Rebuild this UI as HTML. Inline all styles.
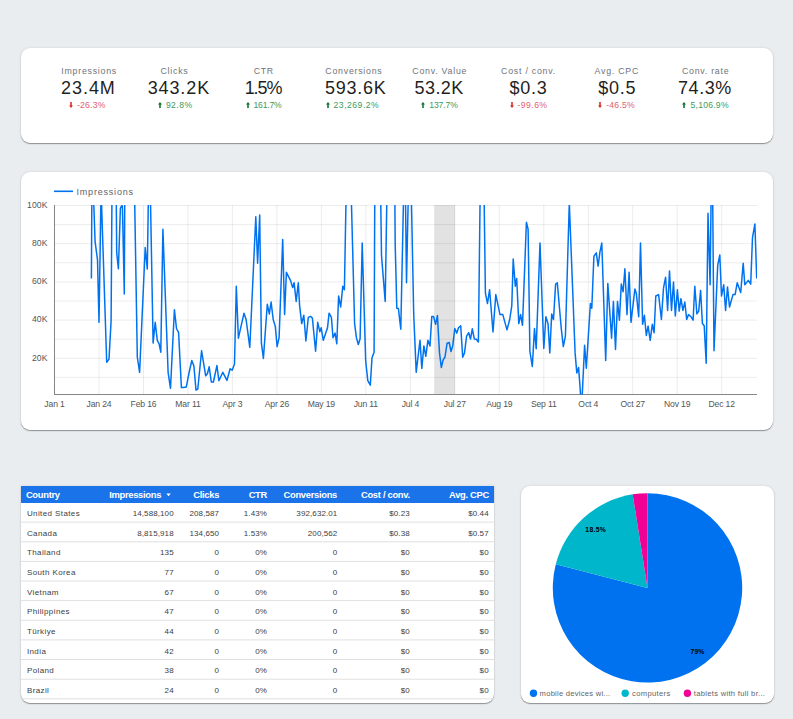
<!DOCTYPE html>
<html><head><meta charset="utf-8"><style>
html,body{margin:0;padding:0;}
body{width:793px;height:719px;overflow:hidden;background:#e9edf0;position:relative;font-family:"Liberation Sans", sans-serif;}
.card{position:absolute;background:#fff;border-radius:9px;box-shadow:0 1px 1px rgba(0,0,0,.36),0 0 3px rgba(0,0,0,.11);}
.t{position:absolute;white-space:nowrap;}
svg{position:absolute;left:0;top:0;}
</style></head><body>
<div class="card" style="left:21px;top:48px;width:752px;height:95px;"></div>
<div class="card" style="left:21px;top:172px;width:752px;height:257.5px;"></div>
<div class="card" style="left:21px;top:486px;width:473px;height:217px;border-radius:0 0 9px 9px;"></div>
<div class="card" style="left:521px;top:486px;width:253px;height:217px;"></div>
<div class="t" style="left:-110.85px;width:400px;text-align:center;top:67.45px;font-size:8.8px;line-height:8.8px;color:#6f7378;font-weight:normal;letter-spacing:0.75px;">Impressions</div>
<div class="t" style="left:-111.60px;width:400px;text-align:center;top:78.56px;font-size:18px;line-height:18px;color:#1f1f1f;font-weight:normal;letter-spacing:0.95px;">23.4M</div>
<div class="t" style="left:-112.70px;width:400px;text-align:center;top:100.92px;font-size:8.6px;line-height:8.6px;color:#e06070;font-weight:normal;letter-spacing:0.25px;"><svg width="4" height="6" viewBox="0 0 4 6" style="position:static;display:inline-block;vertical-align:0;margin-right:4px"><path d="M2,6 L4,3.6 L2.8,3.6 L2.8,0 L1.2,0 L1.2,3.6 L0,3.6 Z" fill="#d93025"/></svg>-26.3%</div>
<div class="t" style="left:-25.50px;width:400px;text-align:center;top:67.45px;font-size:8.8px;line-height:8.8px;color:#6f7378;font-weight:normal;letter-spacing:0.75px;">Clicks</div>
<div class="t" style="left:-21.15px;width:400px;text-align:center;top:78.56px;font-size:18px;line-height:18px;color:#1f1f1f;font-weight:normal;letter-spacing:0.9px;">343.2K</div>
<div class="t" style="left:-24.80px;width:400px;text-align:center;top:100.92px;font-size:8.6px;line-height:8.6px;color:#3c9a5f;font-weight:normal;letter-spacing:0.45px;"><svg width="4" height="6" viewBox="0 0 4 6" style="position:static;display:inline-block;vertical-align:0;margin-right:4px"><path d="M2,0 L4,2.4 L2.8,2.4 L2.8,6 L1.2,6 L1.2,2.4 L0,2.4 Z" fill="#137333"/></svg>92.8%</div>
<div class="t" style="left:63.80px;width:400px;text-align:center;top:67.45px;font-size:8.8px;line-height:8.8px;color:#6f7378;font-weight:normal;letter-spacing:0.75px;">CTR</div>
<div class="t" style="left:63.00px;width:400px;text-align:center;top:78.56px;font-size:18px;line-height:18px;color:#1f1f1f;font-weight:normal;letter-spacing:-1.1px;">1.5%</div>
<div class="t" style="left:63.50px;width:400px;text-align:center;top:100.92px;font-size:8.6px;line-height:8.6px;color:#3c9a5f;font-weight:normal;letter-spacing:-0.2px;"><svg width="4" height="6" viewBox="0 0 4 6" style="position:static;display:inline-block;vertical-align:0;margin-right:4px"><path d="M2,0 L4,2.4 L2.8,2.4 L2.8,6 L1.2,6 L1.2,2.4 L0,2.4 Z" fill="#137333"/></svg>161.7%</div>
<div class="t" style="left:153.95px;width:400px;text-align:center;top:67.45px;font-size:8.8px;line-height:8.8px;color:#6f7378;font-weight:normal;letter-spacing:0.75px;">Conversions</div>
<div class="t" style="left:155.80px;width:400px;text-align:center;top:78.56px;font-size:18px;line-height:18px;color:#1f1f1f;font-weight:normal;letter-spacing:0.75px;">593.6K</div>
<div class="t" style="left:152.40px;width:400px;text-align:center;top:100.92px;font-size:8.6px;line-height:8.6px;color:#3c9a5f;font-weight:normal;letter-spacing:0.5px;"><svg width="4" height="6" viewBox="0 0 4 6" style="position:static;display:inline-block;vertical-align:0;margin-right:4px"><path d="M2,0 L4,2.4 L2.8,2.4 L2.8,6 L1.2,6 L1.2,2.4 L0,2.4 Z" fill="#137333"/></svg>23,269.2%</div>
<div class="t" style="left:239.75px;width:400px;text-align:center;top:67.45px;font-size:8.8px;line-height:8.8px;color:#6f7378;font-weight:normal;letter-spacing:0.75px;">Conv. Value</div>
<div class="t" style="left:239.10px;width:400px;text-align:center;top:78.56px;font-size:18px;line-height:18px;color:#1f1f1f;font-weight:normal;letter-spacing:0.4px;">53.2K</div>
<div class="t" style="left:239.55px;width:400px;text-align:center;top:100.92px;font-size:8.6px;line-height:8.6px;color:#3c9a5f;font-weight:normal;letter-spacing:-0.1px;"><svg width="4" height="6" viewBox="0 0 4 6" style="position:static;display:inline-block;vertical-align:0;margin-right:4px"><path d="M2,0 L4,2.4 L2.8,2.4 L2.8,6 L1.2,6 L1.2,2.4 L0,2.4 Z" fill="#137333"/></svg>137.7%</div>
<div class="t" style="left:328.50px;width:400px;text-align:center;top:67.45px;font-size:8.8px;line-height:8.8px;color:#6f7378;font-weight:normal;letter-spacing:0.75px;">Cost / conv.</div>
<div class="t" style="left:328.50px;width:400px;text-align:center;top:78.56px;font-size:18px;line-height:18px;color:#1f1f1f;font-weight:normal;letter-spacing:0.8px;">$0.3</div>
<div class="t" style="left:328.50px;width:400px;text-align:center;top:100.92px;font-size:8.6px;line-height:8.6px;color:#e06070;font-weight:normal;letter-spacing:0.45px;"><svg width="4" height="6" viewBox="0 0 4 6" style="position:static;display:inline-block;vertical-align:0;margin-right:4px"><path d="M2,6 L4,3.6 L2.8,3.6 L2.8,0 L1.2,0 L1.2,3.6 L0,3.6 Z" fill="#d93025"/></svg>-99.6%</div>
<div class="t" style="left:416.80px;width:400px;text-align:center;top:67.45px;font-size:8.8px;line-height:8.8px;color:#6f7378;font-weight:normal;letter-spacing:0.75px;">Avg. CPC</div>
<div class="t" style="left:417.30px;width:400px;text-align:center;top:78.56px;font-size:18px;line-height:18px;color:#1f1f1f;font-weight:normal;letter-spacing:0.8px;">$0.5</div>
<div class="t" style="left:416.60px;width:400px;text-align:center;top:100.92px;font-size:8.6px;line-height:8.6px;color:#e06070;font-weight:normal;letter-spacing:0.25px;"><svg width="4" height="6" viewBox="0 0 4 6" style="position:static;display:inline-block;vertical-align:0;margin-right:4px"><path d="M2,6 L4,3.6 L2.8,3.6 L2.8,0 L1.2,0 L1.2,3.6 L0,3.6 Z" fill="#d93025"/></svg>-46.5%</div>
<div class="t" style="left:505.65px;width:400px;text-align:center;top:67.45px;font-size:8.8px;line-height:8.8px;color:#6f7378;font-weight:normal;letter-spacing:0.75px;">Conv. rate</div>
<div class="t" style="left:504.90px;width:400px;text-align:center;top:78.56px;font-size:18px;line-height:18px;color:#1f1f1f;font-weight:normal;letter-spacing:0.5px;">74.3%</div>
<div class="t" style="left:505.65px;width:400px;text-align:center;top:100.92px;font-size:8.6px;line-height:8.6px;color:#3c9a5f;font-weight:normal;letter-spacing:0.25px;"><svg width="4" height="6" viewBox="0 0 4 6" style="position:static;display:inline-block;vertical-align:0;margin-right:4px"><path d="M2,0 L4,2.4 L2.8,2.4 L2.8,6 L1.2,6 L1.2,2.4 L0,2.4 Z" fill="#137333"/></svg>5,106.9%</div>
<svg width="793" height="719" viewBox="0 0 793 719">
<defs><clipPath id="pc"><rect x="54" y="205" width="703" height="189.5"/></clipPath></defs>
<rect x="434.2" y="205" width="20.8" height="189.3" fill="#e2e2e2"/>
<line x1="54" y1="205.5" x2="757" y2="205.5" stroke="#000" stroke-opacity="0.075" stroke-width="1"/>
<line x1="54" y1="224.6" x2="757" y2="224.6" stroke="#000" stroke-opacity="0.075" stroke-width="1"/>
<line x1="54" y1="243.7" x2="757" y2="243.7" stroke="#000" stroke-opacity="0.075" stroke-width="1"/>
<line x1="54" y1="262.8" x2="757" y2="262.8" stroke="#000" stroke-opacity="0.075" stroke-width="1"/>
<line x1="54" y1="281.9" x2="757" y2="281.9" stroke="#000" stroke-opacity="0.075" stroke-width="1"/>
<line x1="54" y1="301.0" x2="757" y2="301.0" stroke="#000" stroke-opacity="0.075" stroke-width="1"/>
<line x1="54" y1="320.1" x2="757" y2="320.1" stroke="#000" stroke-opacity="0.075" stroke-width="1"/>
<line x1="54" y1="339.2" x2="757" y2="339.2" stroke="#000" stroke-opacity="0.075" stroke-width="1"/>
<line x1="54" y1="358.3" x2="757" y2="358.3" stroke="#000" stroke-opacity="0.075" stroke-width="1"/>
<line x1="54" y1="377.4" x2="757" y2="377.4" stroke="#000" stroke-opacity="0.075" stroke-width="1"/>
<line x1="99.0" y1="205" x2="99.0" y2="394" stroke="#000" stroke-opacity="0.075" stroke-width="1"/>
<line x1="143.5" y1="205" x2="143.5" y2="394" stroke="#000" stroke-opacity="0.075" stroke-width="1"/>
<line x1="187.9" y1="205" x2="187.9" y2="394" stroke="#000" stroke-opacity="0.075" stroke-width="1"/>
<line x1="232.4" y1="205" x2="232.4" y2="394" stroke="#000" stroke-opacity="0.075" stroke-width="1"/>
<line x1="276.9" y1="205" x2="276.9" y2="394" stroke="#000" stroke-opacity="0.075" stroke-width="1"/>
<line x1="321.4" y1="205" x2="321.4" y2="394" stroke="#000" stroke-opacity="0.075" stroke-width="1"/>
<line x1="365.9" y1="205" x2="365.9" y2="394" stroke="#000" stroke-opacity="0.075" stroke-width="1"/>
<line x1="410.3" y1="205" x2="410.3" y2="394" stroke="#000" stroke-opacity="0.075" stroke-width="1"/>
<line x1="454.8" y1="205" x2="454.8" y2="394" stroke="#000" stroke-opacity="0.075" stroke-width="1"/>
<line x1="499.3" y1="205" x2="499.3" y2="394" stroke="#000" stroke-opacity="0.075" stroke-width="1"/>
<line x1="543.8" y1="205" x2="543.8" y2="394" stroke="#000" stroke-opacity="0.075" stroke-width="1"/>
<line x1="588.3" y1="205" x2="588.3" y2="394" stroke="#000" stroke-opacity="0.075" stroke-width="1"/>
<line x1="632.7" y1="205" x2="632.7" y2="394" stroke="#000" stroke-opacity="0.075" stroke-width="1"/>
<line x1="677.2" y1="205" x2="677.2" y2="394" stroke="#000" stroke-opacity="0.075" stroke-width="1"/>
<line x1="721.7" y1="205" x2="721.7" y2="394" stroke="#000" stroke-opacity="0.075" stroke-width="1"/>
<line x1="54.5" y1="205" x2="54.5" y2="394.5" stroke="#858585" stroke-width="1"/>
<line x1="54" y1="394.5" x2="757" y2="394.5" stroke="#858585" stroke-width="1"/>
<path d="M91.4,278.6 L91.9,190 L93.3,190 L95.1,241.7 L97.5,259.8 L99,322.3 L101.1,190 L106.7,362.3 L109,359.1 L111.1,320.9 L112,190 L116.2,190 L116.7,252.9 L118.4,268.8 L120.4,208.3 L121.6,205.8 L122.4,206 L124.3,293.9 L124.8,190 L134.5,190 L137.3,357 L139.6,372.3 L145.2,247.6 L147.3,269.1 L148.5,190 L150.3,190 L153.1,343.1 L155.2,322.3 L157.3,340.3 L159.1,343.8 L160.8,352.2 L162.9,229.2 L168.1,372.3 L170.5,388.3 L174.4,309.7 L176.5,328.5 L178.6,332.7 L181.4,387.6 L183.4,387.6 L186.3,386.9 L189,373 L191.8,360.5 L193.9,366 L196,390.1 L197.8,389 L201.6,350.8 L205.7,375.8 L207.4,373.7 L209.2,366.8 L211.3,382 L213.4,382 L216.9,365.6 L218.9,380.7 L222.8,372.3 L227,380.4 L230.1,368.8 L232.2,370.2 L234.5,364 L236.3,286.2 L238.4,338.2 L244,313.2 L246.1,319.5 L249.8,347.3 L255.8,216.7 L257.6,263.3 L259.7,215 L261.4,343.1 L263.4,358.4 L267.3,304.2 L269.3,313.9 L271.1,302.1 L273.2,319.5 L275.3,326.4 L277.1,346.6 L279.1,337.6 L282.7,239.4 L284.6,314.6 L286.4,272.3 L290.6,280.7 L292.7,287.6 L294.1,282.8 L296.2,301.4 L298.3,282.8 L299.6,305.6 L301.7,323.6 L303.8,315.3 L305.9,341 L308.3,317.4 L310.5,316.4 L312.4,318.1 L315.6,351.2 L317.7,322.3 L319.8,331.7 L321.2,327.8 L323.3,340.3 L327.5,327.8 L329.1,313.2 L331.4,317.4 L333,337.8 L335.1,333.1 L336.8,343.8 L338.6,296 L340.7,307 L342.8,286.2 L344.4,289.7 L346.2,190 L351.1,190 L354.6,323.6 L356.4,337.6 L358.3,344.5 L360.1,338.7 L362.2,243.1 L365.7,361.2 L367.8,380.7 L370.3,385.1 L372,357.7 L374.1,352.2 L374.8,190 L380.6,190 L381.5,255.6 L385.2,301.4 L387,190 L394.8,190 L395.2,244.5 L396.8,308.3 L398.4,308.6 L400.8,329.2 L403.7,190 L405.4,190 L406.5,282.8 L408.4,190 L411.2,190 L413.7,313.9 L416.2,372.3 L420,340.3 L421.8,368.4 L423.9,345.9 L425.8,356.3 L427.9,340.3 L430,345.9 L431.8,316.4 L433.5,316.4 L435.6,324.3 L437.4,315.6 L439.5,352.9 L441.3,367.5 L443.2,359.8 L445,357 L447.1,343.1 L449.2,342.4 L451,351.5 L452.7,345.9 L454.8,328.5 L456.8,333.1 L458.5,327.8 L460.7,325.7 L462.7,357.3 L464.5,352.9 L466.6,336.2 L468.7,332.7 L470.5,339 L472.3,328.8 L474.3,338.9 L476.3,339.2 L478.4,342 L480.2,190 L484,190 L485.4,293.2 L487.5,303.5 L489.6,289.7 L493,332 L495.8,294.6 L500,314.6 L502.8,314.6 L507,329.9 L509.7,319.5 L511.8,305.6 L513.2,259.1 L515.3,286.2 L516.7,278.6 L518.8,323.6 L520.6,314.6 L522.5,325.3 L526.4,222.3 L528.1,229.2 L529.9,351.5 L532.3,366.5 L534.5,328.5 L536.2,348.7 L540,243.1 L543.8,348.4 L545.9,316.7 L548,323.6 L549.8,352.9 L551.7,313.9 L553.5,319.5 L555.6,284.1 L557.3,282.8 L561.2,327.8 L563.3,346.6 L565.4,336.2 L569.3,203 L575.1,352.9 L576.8,373 L578.6,367.5 L580.7,396 L582.1,398 L584.6,345.2 L586.3,368.2 L590.4,303.5 L591.8,308.3 L593.9,256.3 L596.3,252.9 L598.1,266.1 L599.9,252.2 L601.8,243.1 L605.7,360.5 L607.8,283.4 L611.6,338.2 L613.4,301.4 L615.5,349.4 L617.5,301.4 L619.4,320.2 L621.3,284.1 L623.1,291.8 L624.9,268.8 L627,314.6 L629.1,272.3 L631,322.3 L634.9,289 L636.3,293.2 L638.7,316.7 L640.5,243.1 L642.6,324.3 L644.4,315.3 L646.3,335.5 L648.1,326.1 L650.2,340.3 L652.3,324.3 L654.1,332.7 L655.8,296 L658.6,294.6 L661.4,319.5 L663.5,288 L665.6,277.2 L667.6,310.4 L669.5,270.9 L671.5,310.4 L673.5,282.1 L675.3,316 L677.4,289.7 L679.2,311.1 L680.9,298.7 L682.9,310.4 L684.8,302.1 L686.7,319.5 L688.5,314.6 L690.9,316.7 L693.1,320.2 L694.8,286.2 L696.9,313.9 L698.7,311.1 L700.6,290.4 L702.4,323.6 L704.2,325.7 L706.2,363.3 L708,213.2 L710.1,284.8 L711.2,190 L712.6,190 L714,350.8 L717.7,265.4 L719.8,254.9 L721.5,296 L723.7,284.8 L725.6,310.4 L727.5,286.9 L729.5,307 L733,294.6 L735.1,294.6 L737.2,282.8 L740.7,292.5 L743.2,263.3 L744.8,284.8 L748.3,280.4 L750.7,284.1 L752.5,237.6 L754.9,223.9 L756.7,278.6" fill="none" stroke="#0072f0" stroke-width="1.5" stroke-linejoin="round" clip-path="url(#pc)"/>
<line x1="54" y1="191.3" x2="73" y2="191.3" stroke="#0072f0" stroke-width="1.6"/>
</svg>
<div class="t" style="left:76.50px;top:188.28px;font-size:9px;line-height:9px;color:#5f6368;font-weight:normal;letter-spacing:0.8px;">Impressions</div>
<div class="t" style="left:-352.50px;width:400px;text-align:right;top:200.82px;font-size:8.6px;line-height:8.6px;color:#555555;font-weight:normal;letter-spacing:0.1px;">100K</div>
<div class="t" style="left:-352.50px;width:400px;text-align:right;top:239.02px;font-size:8.6px;line-height:8.6px;color:#555555;font-weight:normal;letter-spacing:0.1px;">80K</div>
<div class="t" style="left:-352.50px;width:400px;text-align:right;top:277.22px;font-size:8.6px;line-height:8.6px;color:#555555;font-weight:normal;letter-spacing:0.1px;">60K</div>
<div class="t" style="left:-352.50px;width:400px;text-align:right;top:315.42px;font-size:8.6px;line-height:8.6px;color:#555555;font-weight:normal;letter-spacing:0.1px;">40K</div>
<div class="t" style="left:-352.50px;width:400px;text-align:right;top:353.62px;font-size:8.6px;line-height:8.6px;color:#555555;font-weight:normal;letter-spacing:0.1px;">20K</div>
<div class="t" style="left:-145.50px;width:400px;text-align:center;top:399.92px;font-size:8.6px;line-height:8.6px;color:#555555;font-weight:normal;letter-spacing:-0.15px;">Jan 1</div>
<div class="t" style="left:-101.02px;width:400px;text-align:center;top:399.92px;font-size:8.6px;line-height:8.6px;color:#555555;font-weight:normal;letter-spacing:-0.15px;">Jan 24</div>
<div class="t" style="left:-56.54px;width:400px;text-align:center;top:399.92px;font-size:8.6px;line-height:8.6px;color:#555555;font-weight:normal;letter-spacing:-0.15px;">Feb 16</div>
<div class="t" style="left:-12.06px;width:400px;text-align:center;top:399.92px;font-size:8.6px;line-height:8.6px;color:#555555;font-weight:normal;letter-spacing:-0.15px;">Mar 11</div>
<div class="t" style="left:32.42px;width:400px;text-align:center;top:399.92px;font-size:8.6px;line-height:8.6px;color:#555555;font-weight:normal;letter-spacing:-0.15px;">Apr 3</div>
<div class="t" style="left:76.90px;width:400px;text-align:center;top:399.92px;font-size:8.6px;line-height:8.6px;color:#555555;font-weight:normal;letter-spacing:-0.15px;">Apr 26</div>
<div class="t" style="left:121.38px;width:400px;text-align:center;top:399.92px;font-size:8.6px;line-height:8.6px;color:#555555;font-weight:normal;letter-spacing:-0.15px;">May 19</div>
<div class="t" style="left:165.86px;width:400px;text-align:center;top:399.92px;font-size:8.6px;line-height:8.6px;color:#555555;font-weight:normal;letter-spacing:-0.15px;">Jun 11</div>
<div class="t" style="left:210.34px;width:400px;text-align:center;top:399.92px;font-size:8.6px;line-height:8.6px;color:#555555;font-weight:normal;letter-spacing:-0.15px;">Jul 4</div>
<div class="t" style="left:254.82px;width:400px;text-align:center;top:399.92px;font-size:8.6px;line-height:8.6px;color:#555555;font-weight:normal;letter-spacing:-0.15px;">Jul 27</div>
<div class="t" style="left:299.30px;width:400px;text-align:center;top:399.92px;font-size:8.6px;line-height:8.6px;color:#555555;font-weight:normal;letter-spacing:-0.15px;">Aug 19</div>
<div class="t" style="left:343.78px;width:400px;text-align:center;top:399.92px;font-size:8.6px;line-height:8.6px;color:#555555;font-weight:normal;letter-spacing:-0.15px;">Sep 11</div>
<div class="t" style="left:388.26px;width:400px;text-align:center;top:399.92px;font-size:8.6px;line-height:8.6px;color:#555555;font-weight:normal;letter-spacing:-0.15px;">Oct 4</div>
<div class="t" style="left:432.74px;width:400px;text-align:center;top:399.92px;font-size:8.6px;line-height:8.6px;color:#555555;font-weight:normal;letter-spacing:-0.15px;">Oct 27</div>
<div class="t" style="left:477.22px;width:400px;text-align:center;top:399.92px;font-size:8.6px;line-height:8.6px;color:#555555;font-weight:normal;letter-spacing:-0.15px;">Nov 19</div>
<div class="t" style="left:521.70px;width:400px;text-align:center;top:399.92px;font-size:8.6px;line-height:8.6px;color:#555555;font-weight:normal;letter-spacing:-0.15px;">Dec 12</div>
<div style="position:absolute;left:21px;top:486px;width:473px;height:17px;background:#1a73e8;"></div>
<div class="t" style="left:25.90px;top:490.34px;font-size:9.4px;line-height:9.4px;color:#ffffff;font-weight:bold;letter-spacing:-0.3px;">Country</div>
<div class="t" style="left:-238.90px;width:400px;text-align:right;top:490.34px;font-size:9.4px;line-height:9.4px;color:#ffffff;font-weight:bold;letter-spacing:-0.3px;">Impressions</div>
<div class="t" style="left:-180.90px;width:400px;text-align:right;top:490.34px;font-size:9.4px;line-height:9.4px;color:#ffffff;font-weight:bold;letter-spacing:-0.3px;">Clicks</div>
<div class="t" style="left:-133.00px;width:400px;text-align:right;top:490.34px;font-size:9.4px;line-height:9.4px;color:#ffffff;font-weight:bold;letter-spacing:-0.3px;">CTR</div>
<div class="t" style="left:-63.00px;width:400px;text-align:right;top:490.34px;font-size:9.4px;line-height:9.4px;color:#ffffff;font-weight:bold;letter-spacing:-0.3px;">Conversions</div>
<div class="t" style="left:9.80px;width:400px;text-align:right;top:490.34px;font-size:9.4px;line-height:9.4px;color:#ffffff;font-weight:bold;letter-spacing:-0.3px;">Cost / conv.</div>
<div class="t" style="left:89.00px;width:400px;text-align:right;top:490.34px;font-size:9.4px;line-height:9.4px;color:#ffffff;font-weight:bold;letter-spacing:-0.3px;">Avg. CPC</div>
<svg width="793" height="719"><path d="M166.3,493.5 L170.8,493.5 L168.55,496.3 Z" fill="#fff"/></svg>
<svg width="793" height="719">
<line x1="21" y1="522.1" x2="494" y2="522.1" stroke="#e0e0e0" stroke-width="1"/>
<line x1="21" y1="541.8" x2="494" y2="541.8" stroke="#e0e0e0" stroke-width="1"/>
<line x1="21" y1="561.4" x2="494" y2="561.4" stroke="#e0e0e0" stroke-width="1"/>
<line x1="21" y1="581.0" x2="494" y2="581.0" stroke="#e0e0e0" stroke-width="1"/>
<line x1="21" y1="600.6" x2="494" y2="600.6" stroke="#e0e0e0" stroke-width="1"/>
<line x1="21" y1="620.3" x2="494" y2="620.3" stroke="#e0e0e0" stroke-width="1"/>
<line x1="21" y1="639.9" x2="494" y2="639.9" stroke="#e0e0e0" stroke-width="1"/>
<line x1="21" y1="659.5" x2="494" y2="659.5" stroke="#e0e0e0" stroke-width="1"/>
<line x1="21" y1="679.2" x2="494" y2="679.2" stroke="#e0e0e0" stroke-width="1"/>
<line x1="21" y1="698.8" x2="494" y2="698.8" stroke="#e0e0e0" stroke-width="1"/>
</svg>
<div class="t" style="left:26.90px;top:509.93px;font-size:8px;line-height:8px;color:#3c4043;font-weight:normal;letter-spacing:0.4px;">United States</div>
<div class="t" style="left:-226.30px;width:400px;text-align:right;top:509.93px;font-size:8px;line-height:8px;color:#3c4043;font-weight:normal;letter-spacing:0.1px;">14,588,100</div>
<div class="t" style="left:-180.90px;width:400px;text-align:right;top:509.93px;font-size:8px;line-height:8px;color:#3c4043;font-weight:normal;letter-spacing:0.1px;">208,587</div>
<div class="t" style="left:-133.00px;width:400px;text-align:right;top:509.93px;font-size:8px;line-height:8px;color:#3c4043;font-weight:normal;letter-spacing:0.1px;">1.43%</div>
<div class="t" style="left:-62.60px;width:400px;text-align:right;top:509.93px;font-size:8px;line-height:8px;color:#3c4043;font-weight:normal;letter-spacing:0.1px;">392,632.01</div>
<div class="t" style="left:9.80px;width:400px;text-align:right;top:509.93px;font-size:8px;line-height:8px;color:#3c4043;font-weight:normal;letter-spacing:0.1px;">$0.23</div>
<div class="t" style="left:88.70px;width:400px;text-align:right;top:509.93px;font-size:8px;line-height:8px;color:#3c4043;font-weight:normal;letter-spacing:0.1px;">$0.44</div>
<div class="t" style="left:26.90px;top:529.59px;font-size:8px;line-height:8px;color:#3c4043;font-weight:normal;letter-spacing:0.4px;">Canada</div>
<div class="t" style="left:-226.30px;width:400px;text-align:right;top:529.59px;font-size:8px;line-height:8px;color:#3c4043;font-weight:normal;letter-spacing:0.1px;">8,815,918</div>
<div class="t" style="left:-180.90px;width:400px;text-align:right;top:529.59px;font-size:8px;line-height:8px;color:#3c4043;font-weight:normal;letter-spacing:0.1px;">134,650</div>
<div class="t" style="left:-133.00px;width:400px;text-align:right;top:529.59px;font-size:8px;line-height:8px;color:#3c4043;font-weight:normal;letter-spacing:0.1px;">1.53%</div>
<div class="t" style="left:-62.60px;width:400px;text-align:right;top:529.59px;font-size:8px;line-height:8px;color:#3c4043;font-weight:normal;letter-spacing:0.1px;">200,562</div>
<div class="t" style="left:9.80px;width:400px;text-align:right;top:529.59px;font-size:8px;line-height:8px;color:#3c4043;font-weight:normal;letter-spacing:0.1px;">$0.38</div>
<div class="t" style="left:88.70px;width:400px;text-align:right;top:529.59px;font-size:8px;line-height:8px;color:#3c4043;font-weight:normal;letter-spacing:0.1px;">$0.57</div>
<div class="t" style="left:26.90px;top:549.25px;font-size:8px;line-height:8px;color:#3c4043;font-weight:normal;letter-spacing:0.4px;">Thailand</div>
<div class="t" style="left:-226.30px;width:400px;text-align:right;top:549.25px;font-size:8px;line-height:8px;color:#3c4043;font-weight:normal;letter-spacing:0.1px;">135</div>
<div class="t" style="left:-180.90px;width:400px;text-align:right;top:549.25px;font-size:8px;line-height:8px;color:#3c4043;font-weight:normal;letter-spacing:0.1px;">0</div>
<div class="t" style="left:-133.00px;width:400px;text-align:right;top:549.25px;font-size:8px;line-height:8px;color:#3c4043;font-weight:normal;letter-spacing:0.1px;">0%</div>
<div class="t" style="left:-62.60px;width:400px;text-align:right;top:549.25px;font-size:8px;line-height:8px;color:#3c4043;font-weight:normal;letter-spacing:0.1px;">0</div>
<div class="t" style="left:9.80px;width:400px;text-align:right;top:549.25px;font-size:8px;line-height:8px;color:#3c4043;font-weight:normal;letter-spacing:0.1px;">$0</div>
<div class="t" style="left:88.70px;width:400px;text-align:right;top:549.25px;font-size:8px;line-height:8px;color:#3c4043;font-weight:normal;letter-spacing:0.1px;">$0</div>
<div class="t" style="left:26.90px;top:568.91px;font-size:8px;line-height:8px;color:#3c4043;font-weight:normal;letter-spacing:0.4px;">South Korea</div>
<div class="t" style="left:-226.30px;width:400px;text-align:right;top:568.91px;font-size:8px;line-height:8px;color:#3c4043;font-weight:normal;letter-spacing:0.1px;">77</div>
<div class="t" style="left:-180.90px;width:400px;text-align:right;top:568.91px;font-size:8px;line-height:8px;color:#3c4043;font-weight:normal;letter-spacing:0.1px;">0</div>
<div class="t" style="left:-133.00px;width:400px;text-align:right;top:568.91px;font-size:8px;line-height:8px;color:#3c4043;font-weight:normal;letter-spacing:0.1px;">0%</div>
<div class="t" style="left:-62.60px;width:400px;text-align:right;top:568.91px;font-size:8px;line-height:8px;color:#3c4043;font-weight:normal;letter-spacing:0.1px;">0</div>
<div class="t" style="left:9.80px;width:400px;text-align:right;top:568.91px;font-size:8px;line-height:8px;color:#3c4043;font-weight:normal;letter-spacing:0.1px;">$0</div>
<div class="t" style="left:88.70px;width:400px;text-align:right;top:568.91px;font-size:8px;line-height:8px;color:#3c4043;font-weight:normal;letter-spacing:0.1px;">$0</div>
<div class="t" style="left:26.90px;top:588.57px;font-size:8px;line-height:8px;color:#3c4043;font-weight:normal;letter-spacing:0.4px;">Vietnam</div>
<div class="t" style="left:-226.30px;width:400px;text-align:right;top:588.57px;font-size:8px;line-height:8px;color:#3c4043;font-weight:normal;letter-spacing:0.1px;">67</div>
<div class="t" style="left:-180.90px;width:400px;text-align:right;top:588.57px;font-size:8px;line-height:8px;color:#3c4043;font-weight:normal;letter-spacing:0.1px;">0</div>
<div class="t" style="left:-133.00px;width:400px;text-align:right;top:588.57px;font-size:8px;line-height:8px;color:#3c4043;font-weight:normal;letter-spacing:0.1px;">0%</div>
<div class="t" style="left:-62.60px;width:400px;text-align:right;top:588.57px;font-size:8px;line-height:8px;color:#3c4043;font-weight:normal;letter-spacing:0.1px;">0</div>
<div class="t" style="left:9.80px;width:400px;text-align:right;top:588.57px;font-size:8px;line-height:8px;color:#3c4043;font-weight:normal;letter-spacing:0.1px;">$0</div>
<div class="t" style="left:88.70px;width:400px;text-align:right;top:588.57px;font-size:8px;line-height:8px;color:#3c4043;font-weight:normal;letter-spacing:0.1px;">$0</div>
<div class="t" style="left:26.90px;top:608.23px;font-size:8px;line-height:8px;color:#3c4043;font-weight:normal;letter-spacing:0.4px;">Philippines</div>
<div class="t" style="left:-226.30px;width:400px;text-align:right;top:608.23px;font-size:8px;line-height:8px;color:#3c4043;font-weight:normal;letter-spacing:0.1px;">47</div>
<div class="t" style="left:-180.90px;width:400px;text-align:right;top:608.23px;font-size:8px;line-height:8px;color:#3c4043;font-weight:normal;letter-spacing:0.1px;">0</div>
<div class="t" style="left:-133.00px;width:400px;text-align:right;top:608.23px;font-size:8px;line-height:8px;color:#3c4043;font-weight:normal;letter-spacing:0.1px;">0%</div>
<div class="t" style="left:-62.60px;width:400px;text-align:right;top:608.23px;font-size:8px;line-height:8px;color:#3c4043;font-weight:normal;letter-spacing:0.1px;">0</div>
<div class="t" style="left:9.80px;width:400px;text-align:right;top:608.23px;font-size:8px;line-height:8px;color:#3c4043;font-weight:normal;letter-spacing:0.1px;">$0</div>
<div class="t" style="left:88.70px;width:400px;text-align:right;top:608.23px;font-size:8px;line-height:8px;color:#3c4043;font-weight:normal;letter-spacing:0.1px;">$0</div>
<div class="t" style="left:26.90px;top:627.89px;font-size:8px;line-height:8px;color:#3c4043;font-weight:normal;letter-spacing:0.4px;">Türkiye</div>
<div class="t" style="left:-226.30px;width:400px;text-align:right;top:627.89px;font-size:8px;line-height:8px;color:#3c4043;font-weight:normal;letter-spacing:0.1px;">44</div>
<div class="t" style="left:-180.90px;width:400px;text-align:right;top:627.89px;font-size:8px;line-height:8px;color:#3c4043;font-weight:normal;letter-spacing:0.1px;">0</div>
<div class="t" style="left:-133.00px;width:400px;text-align:right;top:627.89px;font-size:8px;line-height:8px;color:#3c4043;font-weight:normal;letter-spacing:0.1px;">0%</div>
<div class="t" style="left:-62.60px;width:400px;text-align:right;top:627.89px;font-size:8px;line-height:8px;color:#3c4043;font-weight:normal;letter-spacing:0.1px;">0</div>
<div class="t" style="left:9.80px;width:400px;text-align:right;top:627.89px;font-size:8px;line-height:8px;color:#3c4043;font-weight:normal;letter-spacing:0.1px;">$0</div>
<div class="t" style="left:88.70px;width:400px;text-align:right;top:627.89px;font-size:8px;line-height:8px;color:#3c4043;font-weight:normal;letter-spacing:0.1px;">$0</div>
<div class="t" style="left:26.90px;top:647.55px;font-size:8px;line-height:8px;color:#3c4043;font-weight:normal;letter-spacing:0.4px;">India</div>
<div class="t" style="left:-226.30px;width:400px;text-align:right;top:647.55px;font-size:8px;line-height:8px;color:#3c4043;font-weight:normal;letter-spacing:0.1px;">42</div>
<div class="t" style="left:-180.90px;width:400px;text-align:right;top:647.55px;font-size:8px;line-height:8px;color:#3c4043;font-weight:normal;letter-spacing:0.1px;">0</div>
<div class="t" style="left:-133.00px;width:400px;text-align:right;top:647.55px;font-size:8px;line-height:8px;color:#3c4043;font-weight:normal;letter-spacing:0.1px;">0%</div>
<div class="t" style="left:-62.60px;width:400px;text-align:right;top:647.55px;font-size:8px;line-height:8px;color:#3c4043;font-weight:normal;letter-spacing:0.1px;">0</div>
<div class="t" style="left:9.80px;width:400px;text-align:right;top:647.55px;font-size:8px;line-height:8px;color:#3c4043;font-weight:normal;letter-spacing:0.1px;">$0</div>
<div class="t" style="left:88.70px;width:400px;text-align:right;top:647.55px;font-size:8px;line-height:8px;color:#3c4043;font-weight:normal;letter-spacing:0.1px;">$0</div>
<div class="t" style="left:26.90px;top:667.21px;font-size:8px;line-height:8px;color:#3c4043;font-weight:normal;letter-spacing:0.4px;">Poland</div>
<div class="t" style="left:-226.30px;width:400px;text-align:right;top:667.21px;font-size:8px;line-height:8px;color:#3c4043;font-weight:normal;letter-spacing:0.1px;">38</div>
<div class="t" style="left:-180.90px;width:400px;text-align:right;top:667.21px;font-size:8px;line-height:8px;color:#3c4043;font-weight:normal;letter-spacing:0.1px;">0</div>
<div class="t" style="left:-133.00px;width:400px;text-align:right;top:667.21px;font-size:8px;line-height:8px;color:#3c4043;font-weight:normal;letter-spacing:0.1px;">0%</div>
<div class="t" style="left:-62.60px;width:400px;text-align:right;top:667.21px;font-size:8px;line-height:8px;color:#3c4043;font-weight:normal;letter-spacing:0.1px;">0</div>
<div class="t" style="left:9.80px;width:400px;text-align:right;top:667.21px;font-size:8px;line-height:8px;color:#3c4043;font-weight:normal;letter-spacing:0.1px;">$0</div>
<div class="t" style="left:88.70px;width:400px;text-align:right;top:667.21px;font-size:8px;line-height:8px;color:#3c4043;font-weight:normal;letter-spacing:0.1px;">$0</div>
<div class="t" style="left:26.90px;top:686.87px;font-size:8px;line-height:8px;color:#3c4043;font-weight:normal;letter-spacing:0.4px;">Brazil</div>
<div class="t" style="left:-226.30px;width:400px;text-align:right;top:686.87px;font-size:8px;line-height:8px;color:#3c4043;font-weight:normal;letter-spacing:0.1px;">24</div>
<div class="t" style="left:-180.90px;width:400px;text-align:right;top:686.87px;font-size:8px;line-height:8px;color:#3c4043;font-weight:normal;letter-spacing:0.1px;">0</div>
<div class="t" style="left:-133.00px;width:400px;text-align:right;top:686.87px;font-size:8px;line-height:8px;color:#3c4043;font-weight:normal;letter-spacing:0.1px;">0%</div>
<div class="t" style="left:-62.60px;width:400px;text-align:right;top:686.87px;font-size:8px;line-height:8px;color:#3c4043;font-weight:normal;letter-spacing:0.1px;">0</div>
<div class="t" style="left:9.80px;width:400px;text-align:right;top:686.87px;font-size:8px;line-height:8px;color:#3c4043;font-weight:normal;letter-spacing:0.1px;">$0</div>
<div class="t" style="left:88.70px;width:400px;text-align:right;top:686.87px;font-size:8px;line-height:8px;color:#3c4043;font-weight:normal;letter-spacing:0.1px;">$0</div>
<svg width="793" height="719">
<path d="M647.5,587.9 L647.50,493.20 A94.7,94.7 0 1 1 555.78,564.35 Z" fill="#0072f0"/>
<path d="M647.5,587.9 L555.78,564.35 A94.7,94.7 0 0 1 632.69,494.37 Z" fill="#00b6cb"/>
<path d="M647.5,587.9 L632.69,494.37 A94.7,94.7 0 0 1 647.50,493.20 Z" fill="#f10096"/>
<circle cx="533.5" cy="693.3" r="3.7" fill="#0072f0"/>
<circle cx="625.2" cy="693.3" r="3.7" fill="#00b6cb"/>
<circle cx="687.4" cy="693.3" r="3.7" fill="#f10096"/>
</svg>
<div class="t" style="left:585.30px;top:527.24px;font-size:6.8px;line-height:6.8px;color:#000;font-weight:bold;letter-spacing:0.3px;">18.5%</div>
<div class="t" style="left:690.60px;top:649.04px;font-size:6.8px;line-height:6.8px;color:#000;font-weight:bold;letter-spacing:0.05px;">79%</div>
<div class="t" style="left:539.60px;top:689.57px;font-size:7.6px;line-height:7.6px;color:#5f6368;font-weight:normal;letter-spacing:0.25px;">mobile devices wi...</div>
<div class="t" style="left:632.00px;top:689.57px;font-size:7.6px;line-height:7.6px;color:#5f6368;font-weight:normal;letter-spacing:0.35px;">computers</div>
<div class="t" style="left:693.80px;top:689.57px;font-size:7.6px;line-height:7.6px;color:#5f6368;font-weight:normal;letter-spacing:0.3px;">tablets with full br...</div>
</body></html>
